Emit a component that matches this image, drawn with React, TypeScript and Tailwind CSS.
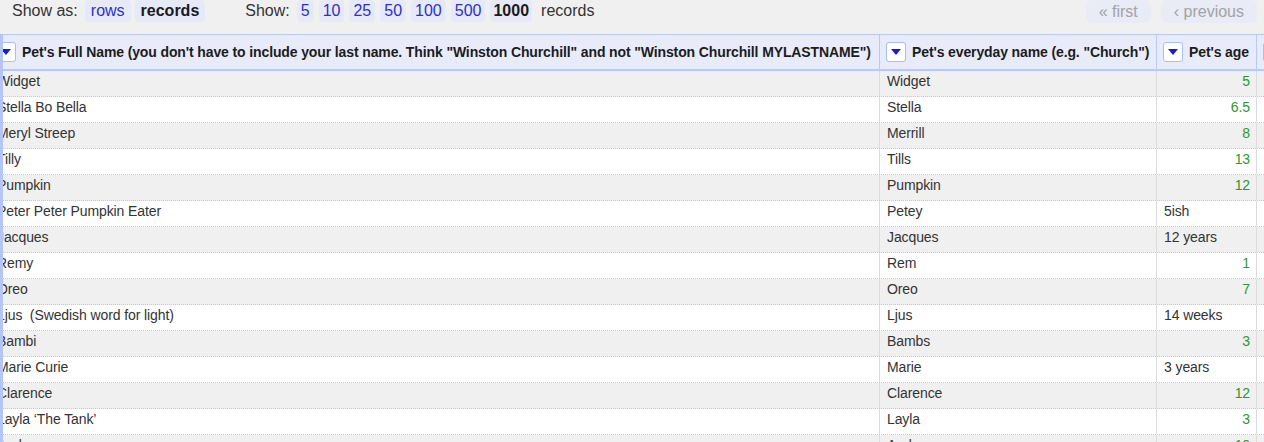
import React from "react";

type Row = [string, string, string, boolean];

const rows: Row[] = [
  ["Widget", "Widget", "5", true],
  ["Stella Bo Bella", "Stella", "6.5", true],
  ["Meryl Streep", "Merrill", "8", true],
  ["Tilly", "Tills", "13", true],
  ["Pumpkin", "Pumpkin", "12", true],
  ["Peter Peter Pumpkin Eater", "Petey", "5ish", false],
  ["Jacques", "Jacques", "12 years", false],
  ["Remy", "Rem", "1", true],
  ["Oreo", "Oreo", "7", true],
  ["Ljus\u00a0 (Swedish word for light)", "Ljus", "14 weeks", false],
  ["Bambi", "Bambs", "3", true],
  ["Marie Curie", "Marie", "3 years", false],
  ["Clarence", "Clarence", "12", true],
  ["Layla \u2018The Tank\u2019", "Layla", "3", true],
  ["Andy", "Andy", "10", true],
];

function DropBtn() {
  return (
    <span className="flex h-5 w-5 shrink-0 items-center justify-center rounded-[3px] border border-[#a9bdf0] bg-white">
      <svg width="10" height="6" viewBox="0 0 10 6">
        <polygon points="0,0 10,0 5,6" fill="#1c1cc4" />
      </svg>
    </span>
  );
}

function HeadCell({ label, last }: { label?: string; last?: boolean }) {
  return (
    <div
      className={
        "flex h-[34px] items-center gap-1.5 overflow-hidden pl-1.5 " +
        (last ? "" : "border-r border-[#b8c9f3]")
      }
    >
      <DropBtn />
      {label ? (
        <span className="whitespace-nowrap text-[14px] font-bold tracking-[-0.12px] text-[#1c1c1c]">{label}</span>
      ) : null}
    </div>
  );
}

export default function App() {
  return (
    <div className="h-[442px] w-[1264px] overflow-hidden bg-[#f0f0f0] font-['Liberation_Sans',Arial,sans-serif] text-[#333]">
      {/* toolbar */}
      <div className="flex h-[34px] items-start justify-between pl-3 pr-[7px] text-[16px]">
        <div className="flex h-[22px] items-center">
          <span>Show as:</span>
          <span className="ml-[7px] flex h-[22px] items-center rounded bg-[#e6e9f7] px-1.5 text-[#2f2fc8]">rows</span>
          <span className="ml-1 flex h-[22px] items-center rounded bg-[#e6e9f7] px-1.5 font-bold text-[#1a1a1a]">records</span>
          <span className="ml-10">Show:</span>
          <div className="ml-[7px] flex items-center gap-[5px]">
            {["5", "10", "25", "50", "100", "500"].map((n) => (
              <span key={n} className="flex h-[22px] items-center rounded bg-[#e6e9f7] px-1 text-[#2f2fc8]">
                {n}
              </span>
            ))}
            <span className="flex h-[22px] items-center rounded bg-[#e6e9f7] px-[3px] font-bold text-[#1a1a1a]">1000</span>
          </div>
          <span className="ml-[9px]">records</span>
        </div>
        <div className="flex items-center gap-[10px]">
          <span className="flex h-[23px] items-center rounded-md bg-[#e9ebf7] px-[13px] text-[#a3a3a3]">« first</span>
          <span className="flex h-[23px] items-center rounded-md bg-[#e9ebf7] px-[13px] text-[#a3a3a3]">‹ previous</span>
        </div>
      </div>

      {/* table */}
      <div className="overflow-hidden border-l-[3px] border-[#b3c6f5]">
        <div className="ml-[-13px] w-[1480px]">
          <div className="grid grid-cols-[890px_277px_100px_213px] border-b-2 border-t border-[#b8c9f3] bg-[#e8ebf9]">
            <HeadCell label={'Pet\'s Full Name (you don\'t have to include your last name. Think "Winston Churchill" and not "Winston Churchill MYLASTNAME")'} />
            <HeadCell label={'Pet\'s everyday name (e.g. "Church")'} />
            <HeadCell label="Pet's age" />
            <HeadCell label="Pet's type" last />
          </div>
          {rows.map(([full, nick, age, num], i) => (
            <div
              key={i}
              className={
                "grid h-[26px] grid-cols-[890px_277px_100px_213px] border-b border-dotted border-[#c9c9c9] text-[14px] leading-[20px] tracking-[-0.1px] " +
                (i % 2 === 0 ? "bg-[#f0f0f0]" : "bg-white")
              }
            >
              <div className="overflow-hidden whitespace-pre border-r border-solid border-[#dcdcdc] pl-[7px]">{full}</div>
              <div className="overflow-hidden whitespace-nowrap border-r border-solid border-[#dcdcdc] pl-[7px]">{nick}</div>
              <div
                className={
                  "overflow-hidden whitespace-nowrap border-r border-solid border-[#dcdcdc] " +
                  (num ? "pr-1.5 text-right text-[#2b9a2b]" : "pl-[7px]")
                }
              >
                {age}
              </div>
              <div className="pl-[7px]"></div>
            </div>
          ))}
        </div>
      </div>
    </div>
  );
}
